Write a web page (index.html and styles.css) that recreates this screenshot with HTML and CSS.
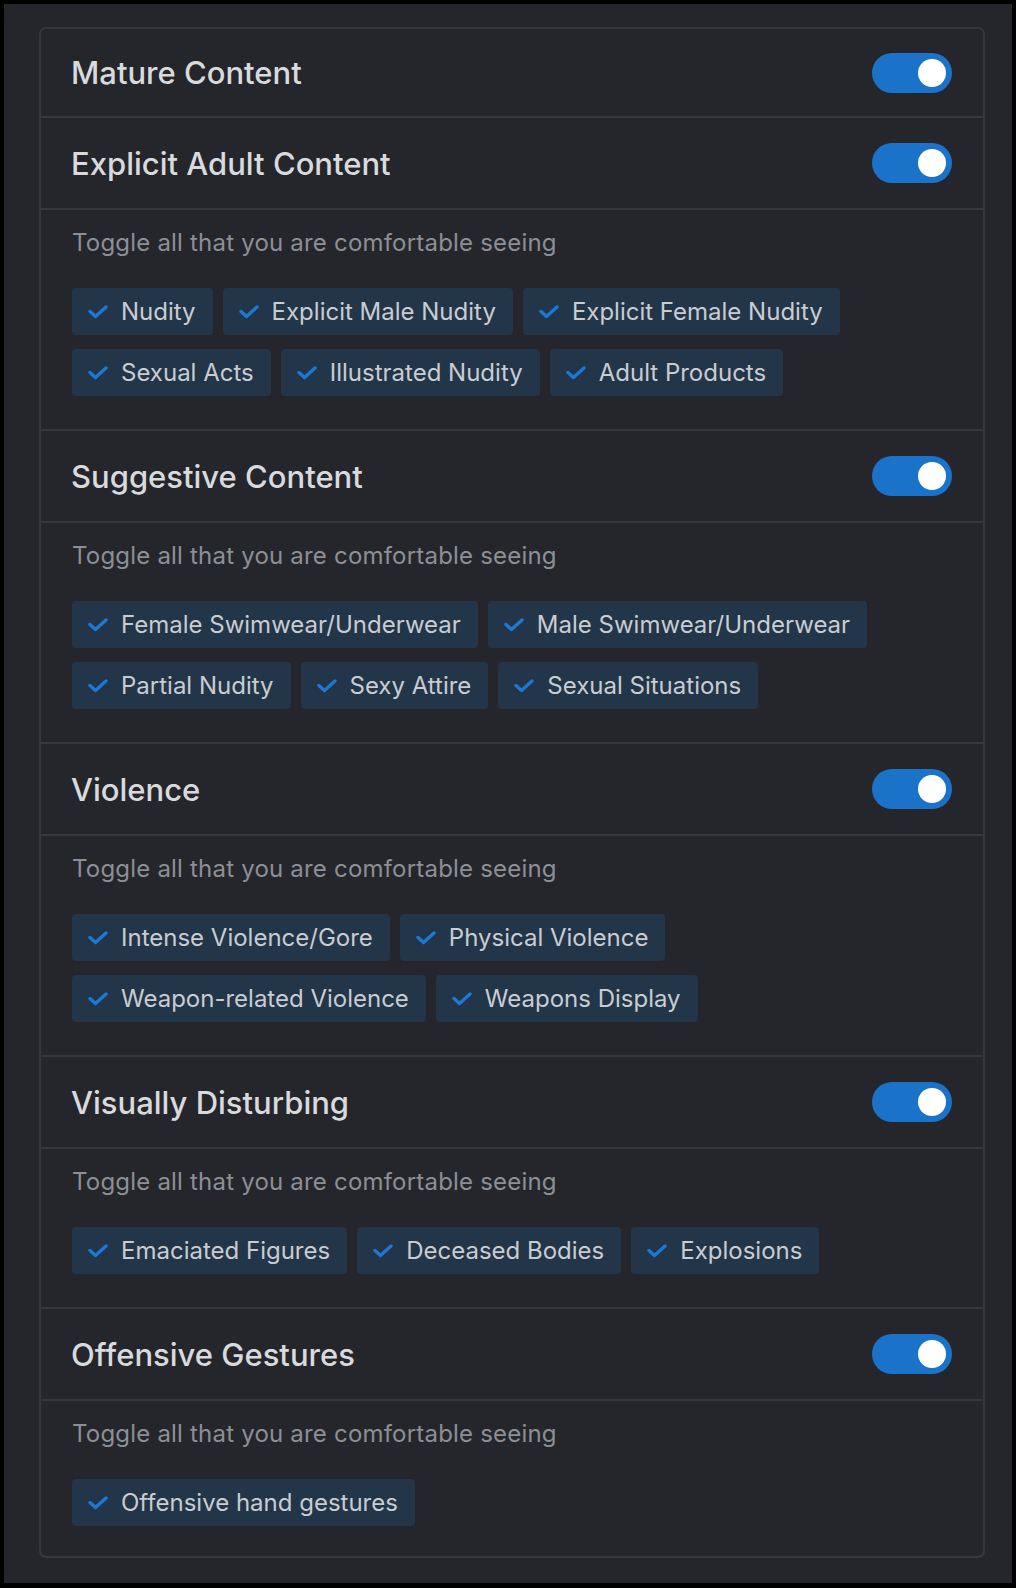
FILE: index.html
```html
<!DOCTYPE html>
<html lang="en">
<head>
<meta charset="utf-8">
<title>Content preferences</title>
<link rel="stylesheet" href="styles.css">
</head>
<body>
<div class="frame">
  <div class="panel">
    <div class="card">
      <div class="head"><span class="title">Mature Content</span><span class="toggle"><span class="knob"></span></span></div>

      <div class="head"><span class="title">Explicit Adult Content</span><span class="toggle"><span class="knob"></span></span></div>
      <div class="body">
        <p class="hint">Toggle all that you are comfortable seeing</p>
        <div class="tags">
          <span class="tag"><svg class="chk" viewBox="0 0 20 14"><path d="M2 6.5 L7.5 11.5 L18 2"/></svg>Nudity</span>
          <span class="tag"><svg class="chk" viewBox="0 0 20 14"><path d="M2 6.5 L7.5 11.5 L18 2"/></svg>Explicit Male Nudity</span>
          <span class="tag"><svg class="chk" viewBox="0 0 20 14"><path d="M2 6.5 L7.5 11.5 L18 2"/></svg>Explicit Female Nudity</span>
          <span class="tag"><svg class="chk" viewBox="0 0 20 14"><path d="M2 6.5 L7.5 11.5 L18 2"/></svg>Sexual Acts</span>
          <span class="tag"><svg class="chk" viewBox="0 0 20 14"><path d="M2 6.5 L7.5 11.5 L18 2"/></svg>Illustrated Nudity</span>
          <span class="tag"><svg class="chk" viewBox="0 0 20 14"><path d="M2 6.5 L7.5 11.5 L18 2"/></svg>Adult Products</span>
        </div>
      </div>

      <div class="head"><span class="title">Suggestive Content</span><span class="toggle"><span class="knob"></span></span></div>
      <div class="body">
        <p class="hint">Toggle all that you are comfortable seeing</p>
        <div class="tags">
          <span class="tag"><svg class="chk" viewBox="0 0 20 14"><path d="M2 6.5 L7.5 11.5 L18 2"/></svg>Female Swimwear/Underwear</span>
          <span class="tag"><svg class="chk" viewBox="0 0 20 14"><path d="M2 6.5 L7.5 11.5 L18 2"/></svg>Male Swimwear/Underwear</span>
          <span class="tag"><svg class="chk" viewBox="0 0 20 14"><path d="M2 6.5 L7.5 11.5 L18 2"/></svg>Partial Nudity</span>
          <span class="tag"><svg class="chk" viewBox="0 0 20 14"><path d="M2 6.5 L7.5 11.5 L18 2"/></svg>Sexy Attire</span>
          <span class="tag"><svg class="chk" viewBox="0 0 20 14"><path d="M2 6.5 L7.5 11.5 L18 2"/></svg>Sexual Situations</span>
        </div>
      </div>

      <div class="head"><span class="title">Violence</span><span class="toggle"><span class="knob"></span></span></div>
      <div class="body">
        <p class="hint">Toggle all that you are comfortable seeing</p>
        <div class="tags">
          <span class="tag"><svg class="chk" viewBox="0 0 20 14"><path d="M2 6.5 L7.5 11.5 L18 2"/></svg>Intense Violence/Gore</span>
          <span class="tag"><svg class="chk" viewBox="0 0 20 14"><path d="M2 6.5 L7.5 11.5 L18 2"/></svg>Physical Violence</span>
          <span class="tag"><svg class="chk" viewBox="0 0 20 14"><path d="M2 6.5 L7.5 11.5 L18 2"/></svg>Weapon-related Violence</span>
          <span class="tag"><svg class="chk" viewBox="0 0 20 14"><path d="M2 6.5 L7.5 11.5 L18 2"/></svg>Weapons Display</span>
        </div>
      </div>

      <div class="head"><span class="title">Visually Disturbing</span><span class="toggle"><span class="knob"></span></span></div>
      <div class="body">
        <p class="hint">Toggle all that you are comfortable seeing</p>
        <div class="tags">
          <span class="tag"><svg class="chk" viewBox="0 0 20 14"><path d="M2 6.5 L7.5 11.5 L18 2"/></svg>Emaciated Figures</span>
          <span class="tag"><svg class="chk" viewBox="0 0 20 14"><path d="M2 6.5 L7.5 11.5 L18 2"/></svg>Deceased Bodies</span>
          <span class="tag"><svg class="chk" viewBox="0 0 20 14"><path d="M2 6.5 L7.5 11.5 L18 2"/></svg>Explosions</span>
        </div>
      </div>

      <div class="head"><span class="title">Offensive Gestures</span><span class="toggle"><span class="knob"></span></span></div>
      <div class="body last">
        <p class="hint">Toggle all that you are comfortable seeing</p>
        <div class="tags">
          <span class="tag"><svg class="chk" viewBox="0 0 20 14"><path d="M2 6.5 L7.5 11.5 L18 2"/></svg>Offensive hand gestures</span>
        </div>
      </div>
    </div>
  </div>
</div>
</body>
</html>
```

FILE: styles.css
```css
* { box-sizing: border-box; }
html, body { margin: 0; padding: 0; background: #000; }
body {
  font-family: Inter, "Noto Sans", "Liberation Sans", sans-serif;
  -webkit-font-smoothing: antialiased;
}
.frame {
  width: 1016px;
  height: 1588px;
  padding: 4px 4px 5px 4px;
  background: #000;
}
.panel {
  height: 100%;
  background: #25262b;
  padding: 23px 27px 26px 35px;
}
.card {
  border: 2px solid #35373d;
  border-radius: 7px;
  background: #25262b;
}
.head {
  height: 92px;
  display: flex;
  align-items: center;
  justify-content: space-between;
  padding: 0 31px 0 30px;
  border-bottom: 2px solid #35373d;
}
.card > .head:first-child { height: 89px; }
.title {
  font-size: 31px;
  font-weight: 500;
  color: #d9dadd;
}
.toggle {
  width: 80px;
  height: 40px;
  border-radius: 20px;
  background: #1b73c9;
  display: flex;
  align-items: center;
  justify-content: flex-end;
  padding-right: 6px;
}
.knob {
  width: 28px;
  height: 28px;
  border-radius: 50%;
  background: #fff;
}
.body {
  padding: 16px 31px 33px 31px;
  border-bottom: 2px solid #35373d;
}
.body.last { border-bottom: 0; padding-bottom: 30px; }
.hint {
  margin: 0 0 28px 0;
  font-size: 24px;
  line-height: 34px;
  letter-spacing: 0.2px;
  color: #8c8f95;
}
.tags {
  display: flex;
  flex-wrap: wrap;
  gap: 14px 10px;
}
.tag {
  height: 47px;
  display: inline-flex;
  align-items: center;
  padding: 0 17px 0 16px;
  border-radius: 4px;
  background: #223549;
  color: #c9ccd2;
  font-size: 24px;
}
.chk {
  width: 20px;
  height: 14px;
  margin-right: 13px;
  flex: none;
}
.chk path {
  fill: none;
  stroke: #1b78d4;
  stroke-width: 3.4;
  stroke-linecap: round;
  stroke-linejoin: round;
}
```
